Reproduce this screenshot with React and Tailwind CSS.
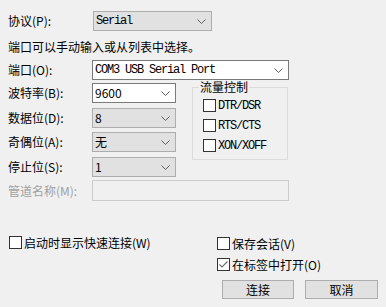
import React from 'react';

const cjk = { fontFamily: '"Noto Sans CJK SC", "Liberation Sans", sans-serif' };
const mono = { fontFamily: '"Liberation Mono", monospace' };

const Chevron = () => (
  <svg width="9" height="5" viewBox="0 0 9 5" className="shrink-0">
    <path d="M0.5 0.5 L4.5 4.5 L8.5 0.5" fill="none" stroke="#606060" strokeWidth="1" />
  </svg>
);

const Select = ({ value, width, white, isMono }) => (
  <div
    className={`flex items-center justify-between h-[20px] pl-[2px] pr-[5px] border ${
      white ? 'bg-white border-[#7a7a7a]' : 'bg-[#e1e1e1] border-[#adadad]'
    }`}
    style={{ width }}
  >
    {isMono ? (
      <span className="text-[12px] tracking-[-1.2px] text-black" style={mono}>
        {value}
      </span>
    ) : (
      <span className="text-[12px] text-black" style={cjk}>{value}</span>
    )}
    <Chevron />
  </div>
);

const Box = ({ checked }) => (
  <span className="w-[13px] h-[13px] border border-[#333333] bg-white flex items-center justify-center shrink-0">
    {checked && (
      <svg width="11" height="11" viewBox="0 0 11 11">
        <path d="M1.5 5.5 L4 8 L9.5 2.5" fill="none" stroke="#707070" strokeWidth="1.2" />
      </svg>
    )}
  </span>
);

const Label = ({ children, w = 84, dim }) => (
  <span className={`text-[12px] leading-none shrink-0 ${dim ? 'text-[#a0a0a0]' : 'text-black'}`} style={{ ...cjk, width: w }}>
    {children}
  </span>
);

export default function App() {
  return (
    <div className="w-[386px] h-[307px] bg-[#f0f0f0] overflow-hidden pl-[8px] select-none" style={cjk}>
      <div className="flex items-center mt-[11px]">
        <Label w={85}>协议(P):</Label>
        <Select value="Serial" width={119} isMono />
      </div>

      <div className="mt-[8px] h-[16px] text-[12px] leading-[16px] text-black">端口可以手动输入或从列表中选择。</div>

      <div className="flex items-center mt-[5px]">
        <Label>端口(O):</Label>
        <Select value="COM3 USB Serial Port" width={197} white isMono />
      </div>

      <div className="flex mt-[3px]">
        <div className="flex flex-col w-[168px]">
          <div className="flex items-center">
            <Label>波特率(B):</Label>
            <Select value="9600" width={84} white />
          </div>
          <div className="flex items-center mt-[5px]">
            <Label>数据位(D):</Label>
            <Select value="8" width={84} />
          </div>
          <div className="flex items-center mt-[4px]">
            <Label>奇偶位(A):</Label>
            <Select value="无" width={84} />
          </div>
          <div className="flex items-center mt-[5px]">
            <Label>停止位(S):</Label>
            <Select value="1" width={84} />
          </div>
        </div>

        <div className="relative ml-[16px] mt-[4px] w-[96px] h-[73px] border border-[#dcdcdc]">
          <span className="absolute left-[6px] top-[-8px] px-[1px] bg-[#f0f0f0] text-[12px] leading-[14px] text-black">
            流量控制
          </span>
          <div className="flex flex-col pl-[10px] pt-[11px] gap-[7px]">
            {['DTR/DSR', 'RTS/CTS', 'XON/XOFF'].map((t) => (
              <div key={t} className="flex items-center gap-[2px] h-[13px]">
                <Box />
                <span className="text-[12px] tracking-[-1.2px] text-black" style={mono}>
                  {t}
                </span>
              </div>
            ))}
          </div>
        </div>
      </div>

      <div className="flex items-center mt-[3px]">
        <Label dim>管道名称(M):</Label>
        <div className="w-[197px] h-[21px] border border-[#cccccc] bg-[#f0f0f0]" />
      </div>

      <div className="flex mt-[35px]">
        <div className="flex items-center gap-[2px] h-[13px] ml-[1px] w-[208px]">
          <Box />
          <span className="text-[12px] text-black leading-none">启动时显示快速连接(W)</span>
        </div>
        <div className="flex flex-col">
          <div className="flex items-center gap-[2px] h-[13px] mt-[1px]">
            <Box />
            <span className="text-[12px] text-black leading-none">保存会话(V)</span>
          </div>
          <div className="flex items-center gap-[2px] h-[13px] mt-[8px]">
            <Box checked />
            <span className="text-[12px] text-black leading-none">在标签中打开(O)</span>
          </div>
          <div className="flex gap-[11px] mt-[9px] ml-[5px]">
            <button className="w-[72px] h-[19px] bg-[#e1e1e1] border border-[#adadad] text-[12px] leading-none text-black">连接</button>
            <button className="w-[73px] h-[19px] bg-[#e1e1e1] border border-[#adadad] text-[12px] leading-none text-black">取消</button>
          </div>
        </div>
      </div>
    </div>
  );
}
